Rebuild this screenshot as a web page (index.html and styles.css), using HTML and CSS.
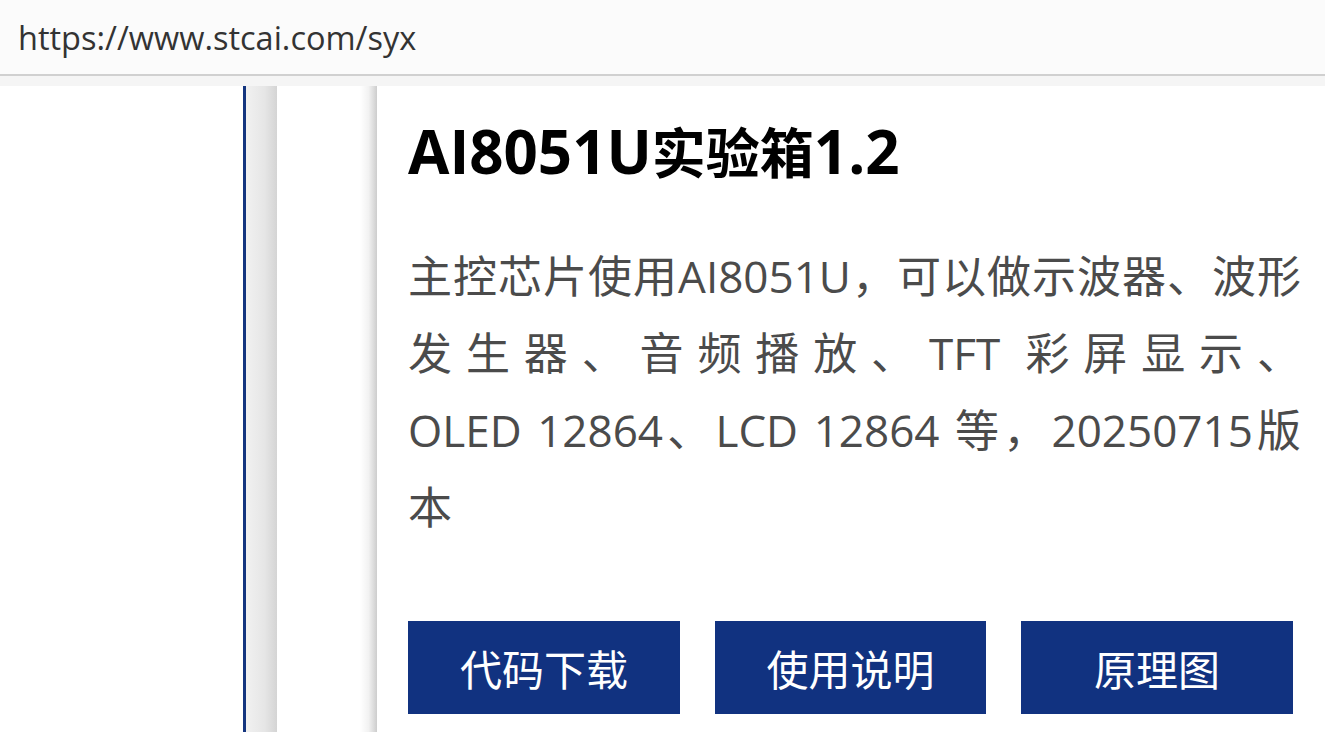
FILE: index.html
```html
<!DOCTYPE html>
<html lang="zh-CN">
<head>
<meta charset="utf-8">
<title>AI8051U实验箱1.2</title>
<link rel="stylesheet" href="styles.css">
</head>
<body>
<div class="urlbar">https://www.stcai.com/syx</div>
<div class="band"></div>
<div class="main">
  <div class="blank"></div>
  <div class="rail"></div>
  <div class="strip"></div>
  <div class="gap"></div>
  <div class="shade"></div>
  <section class="card">
    <h1 class="title">AI8051U<span class="cjk">实验箱</span>1.2</h1>
    <p class="desc">主控芯片使用AI8051U，可以做示波器、波形发生器、音频播放、TFT 彩屏显示、OLED&nbsp;12864、LCD 12864 等，20250715版本</p>
    <div class="actions">
      <a class="btn">代码下载</a>
      <a class="btn">使用说明</a>
      <a class="btn">原理图</a>
    </div>
  </section>
</div>
</body>
</html>
```

FILE: styles.css
```css
html, body {
  margin: 0;
  padding: 0;
  background: #ffffff;
  height: 732px;
  overflow: hidden;
}
body {
  font-family: "Open Sans", "Noto Sans CJK SC", sans-serif;
  color: #000;
}
.urlbar {
  height: 74px;
  background: #fbfbfb;
  border-bottom: 2px solid #d0d0d0;
  display: flex;
  align-items: center;
  padding-left: 18px;
  font-family: "Open Sans", "Noto Sans", sans-serif;
  font-size: 32.5px;
  color: #333333;
}
.band {
  height: 10px;
  background: #f5f5f5;
}
.main {
  display: flex;
  height: 646px;
}
.blank {
  width: 243px;
  flex: none;
}
.rail {
  width: 3px;
  flex: none;
  background: #14357f;
}
.strip {
  width: 31px;
  flex: none;
  background: linear-gradient(to right, #f1f1f1 0%, #e6e6e6 60%, #d4d4d4 100%);
}
.gap {
  width: 83px;
  flex: none;
}
.shade {
  width: 17px;
  flex: none;
  background: linear-gradient(to right, #ffffff 0%, #f2f2f2 50%, #cdcdcd 100%);
}
.card {
  flex: 1;
  padding-left: 31px;
  padding-top: 28px;
  min-width: 0;
}
.title {
  margin: 0;
  font-size: 60px;
  font-weight: 700;
  line-height: 74px;
  color: #000;
}
.title .cjk {
  font-family: "Noto Sans CJK SC", sans-serif;
  font-size: 54px;
}
.desc {
  margin: 50px 0 0 0;
  width: 893px;
  font-size: 44px;
  line-height: 77px;
  color: #4b4b4b;
  text-align: justify;
}
.actions {
  margin-top: 75px;
  display: grid;
  grid-template-columns: 272px 271px 272px;
  column-gap: 35px;
}
.btn {
  height: 93px;
  background: #113280;
  color: #ffffff;
  font-family: "Noto Sans CJK SC", sans-serif;
  font-size: 42px;
  display: flex;
  align-items: center;
  justify-content: center;
}
```
